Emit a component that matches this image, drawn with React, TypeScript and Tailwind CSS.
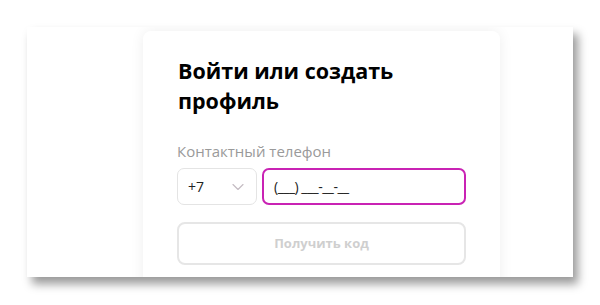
import { ChevronDown } from "lucide-react";

export default function App() {
  return (
    <div className="w-[600px] h-[305px] bg-white pt-[27px] pl-[27px] font-['Open_Sans',sans-serif]">
      {/* window frame */}
      <div className="w-[546px] h-[250px] bg-white overflow-hidden shadow-[5px_7px_9px_rgba(0,0,0,0.4)] pt-[4px] pl-[116px]">
        <div className="w-[357px] h-[300px] bg-white rounded-[8px] shadow-[0_0_14px_rgba(0,0,0,0.07)] px-[34px] pt-[25px]">
          <h1 className="text-[21.5px] leading-[30px] font-bold text-black pl-[1px]">
            Войти или создать профиль
          </h1>

          <div className="mt-[26px] text-[15px] leading-[18px] text-[#9a9a9a]">
            Контактный телефон
          </div>

          <div className="mt-[8px] flex gap-[5px]">
            <div className="w-[80px] h-[37px] rounded-[7px] border border-[#e4e4e4] flex items-center justify-between pl-[10px] pr-[8px]">
              <span className="text-[14px] text-[#222]">+7</span>
              <ChevronDown className="w-[20px] h-[20px] text-[#c5bcc3]" strokeWidth={1.4} />
            </div>
            <div className="flex-1 h-[37px] rounded-[7px] border-2 border-[#c923b4] flex items-center pl-[10px]">
              <span className="text-[14px] tracking-[-0.5px] text-[#222]">(___) ___-__-__</span>
            </div>
          </div>

          <button className="mt-[17px] w-full h-[43px] rounded-[8px] border-2 border-[#e6e6e6] text-[13px] font-bold text-[#cfcfcf]">
            Получить код
          </button>
        </div>
      </div>
    </div>
  );
}
